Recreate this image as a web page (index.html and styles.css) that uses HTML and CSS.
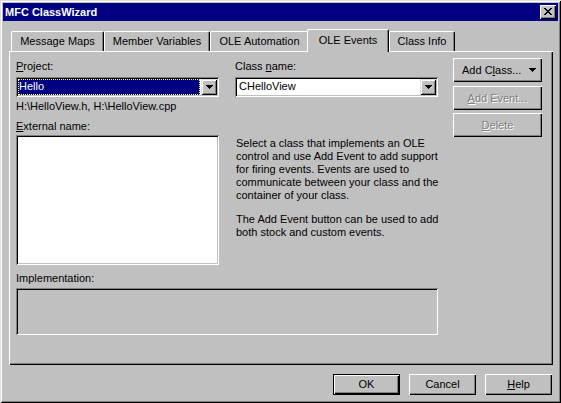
FILE: index.html
```html
<!DOCTYPE html>
<html>
<head>
<meta charset="utf-8">
<link rel="stylesheet" href="styles.css">
</head>
<body>
<div class="window">
  <div class="titlebar">
    <span class="title">MFC ClassWizard</span>
    <div class="close">
      <svg width="8" height="7" viewBox="0 0 8 7" shape-rendering="crispEdges"><path d="M0 0h2v1H0zM6 0h2v1H6zM1 1h2v1H1zM5 1h2v1H5zM2 2h4v1H2zM3 3h2v1H3zM2 4h4v1H2zM1 5h2v1H1zM5 5h2v1H5zM0 6h2v1H0zM6 6h2v1H6z" fill="#000"/></svg>
    </div>
  </div>
  <div class="tabs">
    <div class="tab tab-mm">Message Maps</div>
    <div class="tab tab-mv">Member Variables</div>
    <div class="tab tab-oa">OLE Automation</div>
    <div class="tab tab-oe active">OLE Events</div>
    <div class="tab tab-ci">Class Info</div>
  </div>
  <div class="panel">
    <div class="main">
      <div class="grid">
        <div class="col">
          <div class="lbl"><u>P</u>roject:</div>
          <div class="combo">
            <div class="field sel">Hello</div>
            <div class="drop"><svg width="7" height="4" viewBox="0 0 7 4" shape-rendering="crispEdges"><path d="M0 0h7v1H0zM1 1h5v1H1zM2 2h3v1H2zM3 3h1v1H3z" fill="#000"/></svg></div>
          </div>
          <div class="path">H:\HelloView.h, H:\HelloView.cpp</div>
          <div class="lbl ext"><u>E</u>xternal name:</div>
          <div class="listbox"></div>
        </div>
        <div class="col">
          <div class="lbl">Class <u>n</u>ame:</div>
          <div class="combo">
            <div class="field">CHelloView</div>
            <div class="drop"><svg width="7" height="4" viewBox="0 0 7 4" shape-rendering="crispEdges"><path d="M0 0h7v1H0zM1 1h5v1H1zM2 2h3v1H2zM3 3h1v1H3z" fill="#000"/></svg></div>
          </div>
          <div class="desc">
            <p>Select a class that implements an OLE<br>control and use Add Event to add support<br>for firing events. Events are used to<br>communicate between your class and the<br>container of your class.</p>
            <p>The Add Event button can be used to add<br>both stock and custom events.</p>
          </div>
        </div>
      </div>
      <div class="lbl impl-lbl">Implementation:</div>
      <div class="implbox"></div>
    </div>
    <div class="side">
      <div class="btn btn-addclass"><span>Add C<u>l</u>ass...</span><svg class="arrow" width="7" height="4" viewBox="0 0 7 4" shape-rendering="crispEdges"><path d="M0 0h7v1H0zM1 1h5v1H1zM2 2h3v1H2zM3 3h1v1H3z" fill="#000"/></svg></div>
      <div class="btn disabled btn-addevent"><span><u>A</u>dd Event...</span></div>
      <div class="btn disabled btn-delete"><span><u>D</u>elete</span></div>
    </div>
  </div>
  <div class="footer">
    <div class="btn fbtn default">OK</div>
    <div class="btn fbtn">Cancel</div>
    <div class="btn fbtn"><span><u>H</u>elp</span></div>
  </div>
</div>
</body>
</html>
```
FILE: styles.css
```css
body {
  margin: 0;
  background: #c0c0c0;
  font-family: "Liberation Sans", Arial, sans-serif;
  font-size: 11px;
  color: #000;
}

.window {
  width: 561px;
  height: 403px;
  box-sizing: border-box;
  padding: 3px;
  background: #c0c0c0;
  box-shadow: inset 1px 1px #dfdfdf, inset -1px -1px #000, inset 2px 2px #fff, inset -2px -2px #808080;
  display: flex;
  flex-direction: column;
}

.titlebar {
  height: 18px;
  background: #000080;
  display: flex;
  align-items: center;
  justify-content: space-between;
  padding: 0 2px;
}

.title {
  color: #fff;
  font-weight: bold;
  line-height: 13px;
}

.close {
  width: 16px;
  height: 14px;
  box-sizing: border-box;
  background: #c0c0c0;
  box-shadow: inset 1px 1px #fff, inset -1px -1px #000, inset -2px -2px #808080;
  display: flex;
  align-items: center;
  justify-content: center;
  padding-bottom: 1px;
}

.close svg { display: block; }

.tabs {
  display: flex;
  align-items: flex-end;
  height: 22px;
  margin: 8px 0 0 8px;
  position: relative;
  z-index: 1;
}

.tab {
  height: 20px;
  box-sizing: border-box;
  border-top: 1px solid #fff;
  border-left: 1px solid #fff;
  border-right: 1px solid #000;
  box-shadow: inset -1px 0 #808080;
  border-radius: 2px 2px 0 0;
  text-align: center;
  padding-top: 3px;
  line-height: 13px;
  background: #c0c0c0;
  white-space: nowrap;
}

.tab-mm { width: 93px; }
.tab-mv { width: 106px; }
.tab-oa { width: 99px; }
.tab-oe { width: 82px; }
.tab-ci { width: 66px; }

.tab.active {
  height: 23px;
  margin-bottom: -1px;
  margin-left: -2px;
  padding-top: 4px;
}

.panel {
  margin-left: 6px;
  width: 544px;
  height: 314px;
  box-sizing: border-box;
  padding: 9px 0 0 7px;
  box-shadow: inset 1px 1px #fff, inset -1px -1px #000, inset -2px -2px #808080;
  display: flex;
}

.main {
  width: 422px;
  display: flex;
  flex-direction: column;
}

.grid {
  display: grid;
  grid-template-columns: 203px 203px;
  column-gap: 16px;
}

.col {
  display: flex;
  flex-direction: column;
}

.lbl {
  line-height: 13px;
  height: 13px;
  white-space: nowrap;
}

.combo {
  margin-top: 4px;
  height: 20px;
  box-sizing: border-box;
  padding: 2px;
  background: #fff;
  box-shadow: inset 1px 1px #808080, inset -1px -1px #fff, inset 2px 2px #000, inset -2px -2px #c0c0c0;
  display: flex;
}

.field {
  flex: 1;
  height: 16px;
  box-sizing: border-box;
  border: 1px solid transparent;
  margin-right: 1px;
  padding-left: 1px;
  line-height: 13px;
  white-space: nowrap;
}

.field.sel {
  background: #000080;
  color: #fff;
  border: 1px dotted #ffff80;
  padding-left: 0;
}

.drop {
  width: 16px;
  height: 16px;
  box-sizing: border-box;
  background: #c0c0c0;
  box-shadow: inset 1px 1px #dfdfdf, inset -1px -1px #000, inset 2px 2px #fff, inset -2px -2px #808080;
  display: flex;
  align-items: center;
  justify-content: center;
}

.drop svg { display: block; }

.path {
  margin-top: 3px;
  line-height: 13px;
  white-space: nowrap;
}

.lbl.ext { margin-top: 7px; }

.listbox {
  margin-top: 2px;
  height: 130px;
  background: #fff;
  box-shadow: inset 1px 1px #808080, inset -1px -1px #fff, inset 2px 2px #000, inset -2px -2px #c0c0c0;
}

.desc {
  margin-top: 40px;
  padding-left: 1px;
  white-space: nowrap;
}

.desc p {
  margin: 0;
  line-height: 13px;
}

.desc p + p { margin-top: 11px; }

.impl-lbl { margin-top: 7px; }

.implbox {
  margin-top: 3px;
  height: 47px;
  box-shadow: inset 1px 1px #808080, inset -1px -1px #fff, inset 2px 2px #000, inset -2px -2px #c0c0c0;
}

.side {
  margin-left: 15px;
  margin-top: -2px;
  width: 89px;
  display: flex;
  flex-direction: column;
}

.btn {
  box-sizing: border-box;
  background: #c0c0c0;
  box-shadow: inset 1px 1px #fff, inset -1px -1px #000, inset -2px -2px #808080;
  display: flex;
  align-items: center;
  justify-content: center;
  line-height: 13px;
  white-space: nowrap;
}

.side .btn { height: 24px; }

.btn-addclass {
  justify-content: flex-start;
  padding-left: 9px;
}

.btn-addclass .arrow {
  display: block;
  margin-left: auto;
  margin-right: 6px;
}

.btn-addevent { margin-top: 4px; }
.btn-delete { margin-top: 3px; }

.btn.disabled {
  color: #808080;
  text-shadow: 1px 1px 0 #fff;
}

.footer {
  display: flex;
  justify-content: flex-end;
  gap: 9px;
  margin-top: 9px;
  padding-right: 6px;
}

.fbtn {
  width: 67px;
  height: 21px;
}

.btn.default {
  box-shadow: inset 0 0 0 1px #000, inset 2px 2px #fff, inset -2px -2px #000, inset -3px -3px #808080;
}
```
